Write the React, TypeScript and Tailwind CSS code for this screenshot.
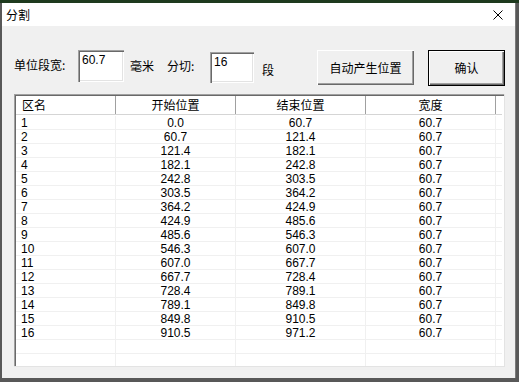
import React from "react";

const cjk = { fontFamily: "'Noto Sans CJK SC', 'Noto Sans', sans-serif" };
const num = { fontFamily: "'Liberation Sans', Arial, sans-serif" };

const rows: [string, string, string, string][] = [
  ["1", "0.0", "60.7", "60.7"],
  ["2", "60.7", "121.4", "60.7"],
  ["3", "121.4", "182.1", "60.7"],
  ["4", "182.1", "242.8", "60.7"],
  ["5", "242.8", "303.5", "60.7"],
  ["6", "303.5", "364.2", "60.7"],
  ["7", "364.2", "424.9", "60.7"],
  ["8", "424.9", "485.6", "60.7"],
  ["9", "485.6", "546.3", "60.7"],
  ["10", "546.3", "607.0", "60.7"],
  ["11", "607.0", "667.7", "60.7"],
  ["12", "667.7", "728.4", "60.7"],
  ["13", "728.4", "789.1", "60.7"],
  ["14", "789.1", "849.8", "60.7"],
  ["15", "849.8", "910.5", "60.7"],
  ["16", "910.5", "971.2", "60.7"],
  ["", "", "", ""],
  ["", "", "", ""],
];

const sunken =
  "bg-white shadow-[inset_1px_1px_#a0a0a0,inset_2px_2px_#696969,inset_-1px_-1px_#ffffff,inset_-2px_-2px_#e3e3e3]";
const raised =
  "bg-[#f0f0f0] shadow-[inset_1px_1px_#ffffff,inset_-1px_-1px_#696969,inset_-2px_-2px_#a0a0a0]";

function Header() {
  const cell =
    "h-full flex items-center border-r border-[#a0a0a0] shadow-[inset_1px_1px_#ffffff] text-[12px] text-black";
  return (
    <div className="flex h-[19px] border-b border-[#d5d5d5] bg-white" style={cjk}>
      <div className={`${cell} w-[100px] pl-[6px]`}>区名</div>
      <div className={`${cell} w-[120px] justify-center`}>开始位置</div>
      <div className={`${cell} w-[130px] justify-center`}>结束位置</div>
      <div className={`${cell} w-[130px] justify-center`}>宽度</div>
      <div className="flex-1" />
    </div>
  );
}

function Row({ r }: { r: [string, string, string, string] }) {
  const cell = "h-full flex items-center border-r border-[#f0f0f0] text-[12px] text-black";
  return (
    <div className="flex h-[14px] border-b border-[#f0f0f0] leading-none" style={num}>
      <div className={`${cell} w-[100px] pl-[5px]`}>{r[0]}</div>
      <div className={`${cell} w-[120px] justify-center`}>{r[1]}</div>
      <div className={`${cell} w-[130px] justify-center`}>{r[2]}</div>
      <div className={`${cell} w-[130px] justify-center`}>{r[3]}</div>
      <div className="flex-1" />
    </div>
  );
}

export default function App() {
  return (
    <div className="w-[519px] h-[382px] bg-[#585858] border-t-[3px] border-[#1e3a1e] pl-[2px] pr-[3px] pb-[4px] flex">
      <div className="flex-1 flex flex-col border-r border-[#7a7a7a]">
        {/* title bar */}
        <div className="h-[23px] bg-white flex items-center justify-between pl-[4px] pr-[12px]">
          <span style={cjk} className="text-[12px] text-black leading-none">
            分割
          </span>
          <svg width="10" height="10" viewBox="0 0 10 10">
            <path d="M0.5 0.5 L9.5 9.5 M9.5 0.5 L0.5 9.5" stroke="#000" strokeWidth="1" />
          </svg>
        </div>

        {/* body */}
        <div className="flex-1 bg-[#f0f0f0] pl-[12px] pt-[24px]">
          <div className="flex items-start h-[36px]" style={cjk}>
            <span className="w-[64px] mt-[7px] text-[12px] leading-[16px] text-black">单位段宽:</span>
            <div className={`w-[46px] h-[32px] ${sunken} pl-[4px] pt-[3px] text-[12px] leading-[14px] text-black`} style={num}>
              60.7
            </div>
            <span className="w-[37px] ml-[6px] mt-[8px] text-[12px] leading-[16px] text-black">毫米</span>
            <span className="w-[43px] mt-[8px] text-[12px] leading-[16px] text-black">分切:</span>
            <div className={`w-[44px] h-[31px] mt-[2px] ${sunken} pl-[4px] pt-[3px] text-[12px] leading-[14px] text-black`} style={num}>
              16
            </div>
            <span className="w-[55px] ml-[8px] mt-[12px] text-[12px] leading-[16px] text-black">段</span>
            <div className={`w-[97px] h-[35px] ${raised} flex items-center justify-center text-[12px] text-black`}>
              自动产生位置
            </div>
            <div className="w-[77px] h-[36px] ml-[14px] border border-black">
              <div className={`w-full h-full ${raised} flex items-center justify-center text-[12px] text-black`}>
                确认
              </div>
            </div>
          </div>

          {/* list */}
          <div className="mt-[8px] w-[491px] h-[273px] overflow-hidden bg-white shadow-[inset_1px_1px_#a0a0a0,inset_2px_2px_#696969] pt-[2px] pl-[2px] pr-[2px] border-r border-b border-[#e3e3e3]">
            <Header />
            <div className="pt-[1px]">
              {rows.map((r, i) => (
                <Row key={i} r={r} />
              ))}
            </div>
          </div>
        </div>
      </div>
    </div>
  );
}
